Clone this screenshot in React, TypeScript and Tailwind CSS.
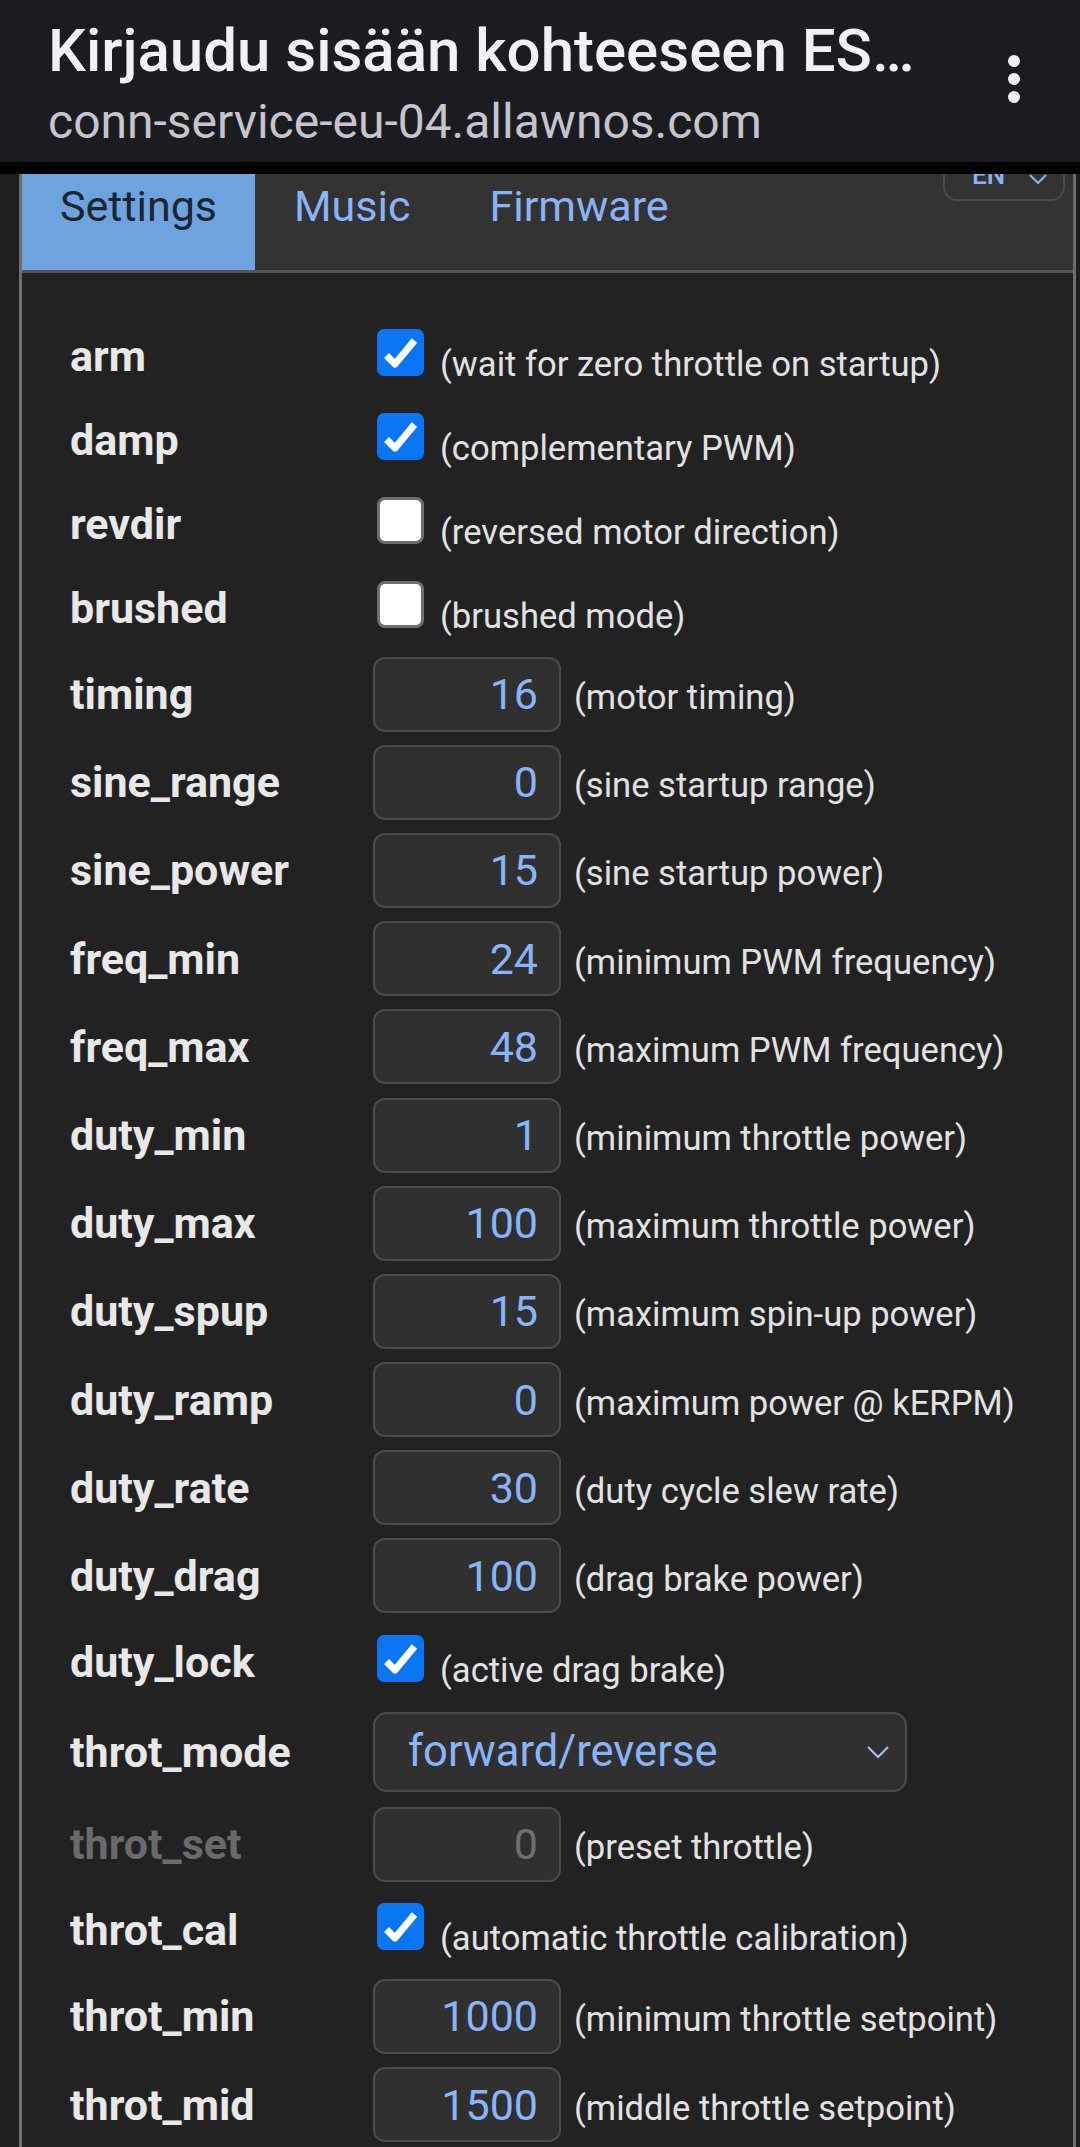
import React from 'react'

type RowDef =
    | { name: string; kind: 'check'; checked: boolean; desc: string }
    | { name: string; kind: 'num'; value: string; desc: string; disabled?: boolean }
    | { name: string; kind: 'select'; value: string }

const ROWS: RowDef[] = [
    { name: 'arm', kind: 'check', checked: true, desc: '(wait for zero throttle on startup)' },
    { name: 'damp', kind: 'check', checked: true, desc: '(complementary PWM)' },
    { name: 'revdir', kind: 'check', checked: false, desc: '(reversed motor direction)' },
    { name: 'brushed', kind: 'check', checked: false, desc: '(brushed mode)' },
    { name: 'timing', kind: 'num', value: '16', desc: '(motor timing)' },
    { name: 'sine_range', kind: 'num', value: '0', desc: '(sine startup range)' },
    { name: 'sine_power', kind: 'num', value: '15', desc: '(sine startup power)' },
    { name: 'freq_min', kind: 'num', value: '24', desc: '(minimum PWM frequency)' },
    { name: 'freq_max', kind: 'num', value: '48', desc: '(maximum PWM frequency)' },
    { name: 'duty_min', kind: 'num', value: '1', desc: '(minimum throttle power)' },
    { name: 'duty_max', kind: 'num', value: '100', desc: '(maximum throttle power)' },
    { name: 'duty_spup', kind: 'num', value: '15', desc: '(maximum spin-up power)' },
    { name: 'duty_ramp', kind: 'num', value: '0', desc: '(maximum power @ kERPM)' },
    { name: 'duty_rate', kind: 'num', value: '30', desc: '(duty cycle slew rate)' },
    { name: 'duty_drag', kind: 'num', value: '100', desc: '(drag brake power)' },
    { name: 'duty_lock', kind: 'check', checked: true, desc: '(active drag brake)' },
    { name: 'throt_mode', kind: 'select', value: 'forward/reverse' },
    { name: 'throt_set', kind: 'num', value: '0', desc: '(preset throttle)', disabled: true },
    { name: 'throt_cal', kind: 'check', checked: true, desc: '(automatic throttle calibration)' },
    { name: 'throt_min', kind: 'num', value: '1000', desc: '(minimum throttle setpoint)' },
    { name: 'throt_mid', kind: 'num', value: '1500', desc: '(middle throttle setpoint)' },
]

function Checkbox({ checked }: { checked: boolean }) {
    if (!checked) {
        return (
            <div className="ml-[4px] h-[47px] w-[47px] shrink-0 rounded-[8px] border-[3px] border-[#6f6f6f] bg-white" />
        )
    }
    return (
        <div className="ml-[4px] h-[47px] w-[47px] shrink-0 rounded-[7px] bg-[#0b76f4]">
            <svg viewBox="0 0 47 47" className="h-full w-full">
                <path
                    d="M9.5 26.5 L18 35 L37.5 11.5"
                    fill="none"
                    stroke="#fff"
                    strokeWidth="7"
                    strokeLinejoin="round"
                />
            </svg>
        </div>
    )
}

function SettingRow({ row }: { row: RowDef }) {
    const height =
        row.kind === 'check' ? 'h-[84px]' : row.kind === 'select' ? 'h-[96px]' : 'h-[88.2px]'
    const disabled = row.kind === 'num' && row.disabled

    return (
        <div className={`flex items-center ${height}`}>
            <div
                className={`w-[303px] shrink-0 text-[43px] font-bold leading-[50px] ${
                    disabled ? 'text-[#6a6a6a]' : 'text-[#e8e8e8]'
                }`}
            >
                {row.name}
            </div>

            {row.kind === 'check' && (
                <div className="flex items-baseline">
                    <Checkbox checked={row.checked} />
                    <span className="ml-[16px] text-[34.6px] leading-[40px] text-[#e2e2e2]">
                        {row.desc}
                    </span>
                </div>
            )}

            {row.kind === 'num' && (
                <div className="flex items-baseline">
                    <div
                        className={`flex h-[75px] w-[188px] shrink-0 items-center justify-end rounded-[12px] border-2 border-[#4b4b4b] bg-[#303030] pr-[21px] text-[43px] leading-[50px] ${
                            disabled ? 'text-[#6f6f6f]' : 'text-[#8ab4f8]'
                        }`}
                    >
                        {row.value}
                    </div>
                    <span className="ml-[13px] text-[34.6px] leading-[40px] text-[#e2e2e2]">
                        {row.desc}
                    </span>
                </div>
            )}

            {row.kind === 'select' && (
                <div className="flex h-[80px] w-[534px] items-center justify-between rounded-[14px] border-2 border-[#4b4b4b] bg-[#303030] pl-[33px] pr-[15px]">
                    <span className="text-[43.5px] leading-[50px] text-[#8ab4f8]">{row.value}</span>
                    <svg viewBox="0 0 24 14" className="h-[14px] w-[24px]">
                        <polyline
                            points="2,2 12,12 22,2"
                            fill="none"
                            stroke="#a9c3e8"
                            strokeWidth="2"
                        />
                    </svg>
                </div>
            )}
        </div>
    )
}

export default function App() {
    return (
        <div className="h-[2147px] w-[1080px] overflow-hidden bg-[#1e1e1e] font-['Roboto',sans-serif]">
            {/* Browser custom-tab header */}
            <header className="flex h-[162px] bg-[#1b1c20]">
                <div className="min-w-0 flex-1 pl-[48px] pt-[16px]">
                    <div className="whitespace-nowrap text-[60px] font-medium leading-[70px] text-[#f1f1f6]">
                        Kirjaudu sisään kohteeseen ES…
                    </div>
                    <div className="mt-[8px] whitespace-nowrap text-[48px] leading-[55px] text-[#c5c5cb]">
                        conn-service-eu-04.allawnos.com
                    </div>
                </div>
                <div className="mr-[60px] mt-[55px] flex w-[12px] flex-col gap-[6px]">
                    <span className="h-[12px] w-[12px] rounded-full bg-[#f1f1f6]" />
                    <span className="h-[12px] w-[12px] rounded-full bg-[#f1f1f6]" />
                    <span className="h-[12px] w-[12px] rounded-full bg-[#f1f1f6]" />
                </div>
            </header>
            <div className="h-[12px] bg-black" />

            {/* Panel */}
            <div className="ml-[19px] mr-[4px] h-full border-x-[3px] border-[#6e6e6e] bg-[#222222]">
                {/* Tabs */}
                <div className="relative flex h-[99px] overflow-hidden border-b-[3px] border-[#555555] bg-[#333333] text-[43px] leading-[50px]">
                    <div className="bg-[#6fa3de] px-[38px] pt-[7px] text-[#1b2633]">Settings</div>
                    <div className="pl-[39px] pr-[40px] pt-[7px] text-[#8ab4f8]">Music</div>
                    <div className="px-[39px] pt-[7px] text-[#8ab4f8]">Firmware</div>

                    {/* Language selector, scrolled mostly under the header */}
                    <div className="absolute right-[8px] top-[-60px] flex h-[87px] w-[122px] items-end justify-between rounded-[14px] border-2 border-[#4b4b4b] pb-[11px] pl-[27px] pr-[16px]">
                        <span className="text-[26px] font-medium leading-[26px] text-[#8ab4f8]">EN</span>
                        <svg viewBox="0 0 18 10" className="mb-[4px] h-[10px] w-[18px]">
                            <polyline points="1,1 9,9 17,1" fill="none" stroke="#8ab4f8" strokeWidth="2" />
                        </svg>
                    </div>
                </div>

                {/* Settings rows */}
                <div className="pl-[48px] pt-[41px]">
                    {ROWS.map((row) => (
                        <SettingRow key={row.name} row={row} />
                    ))}
                </div>
            </div>
        </div>
    )
}
